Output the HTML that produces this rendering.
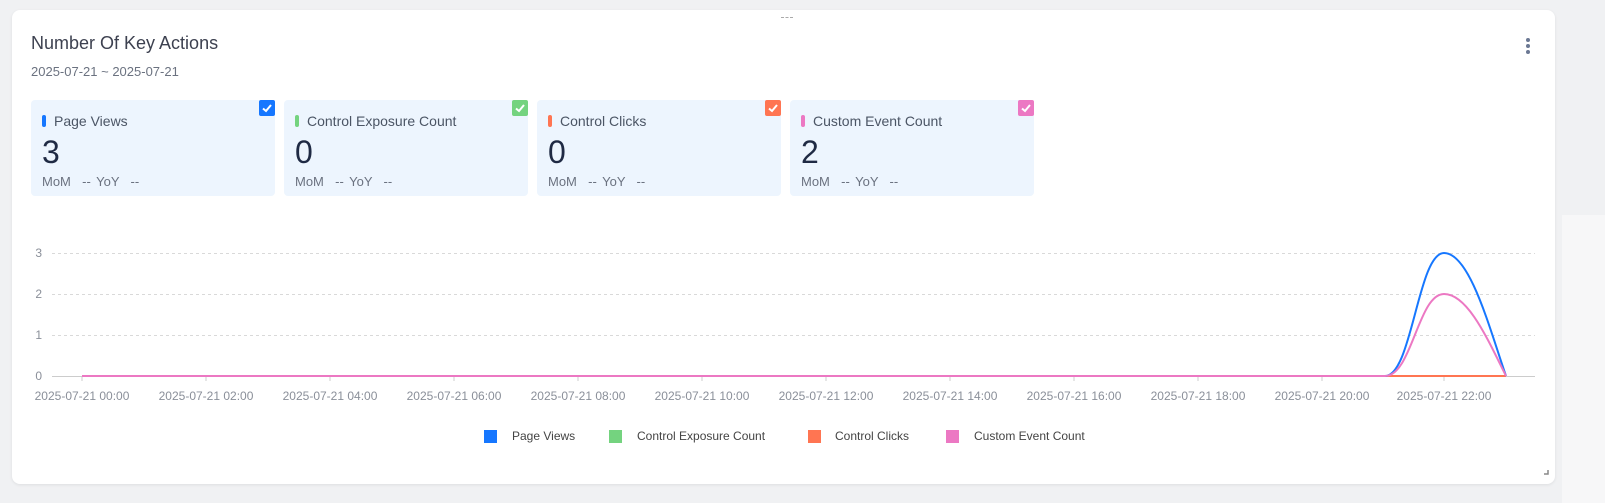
<!DOCTYPE html>
<html><head><meta charset="utf-8"><style>
body{margin:0;width:1605px;height:503px;background:#f0f1f3;font-family:"Liberation Sans",sans-serif;position:relative;overflow:hidden}
.card{position:absolute;left:12px;top:10px;width:1543px;height:474px;background:#fff;border-radius:8px;box-shadow:0 1px 3px rgba(0,0,0,.08)}
.sb{position:absolute;left:1562px;top:215px;width:43px;height:288px;background:#f7f7f8}
.title{position:absolute;left:31px;top:33px;font-size:18px;color:#3d4150}
.date{position:absolute;left:31px;top:64px;font-size:13px;color:#6b7280}
.dots{position:absolute;left:1526px;top:38px;width:4px}
.dots i{display:block;width:4px;height:4px;border-radius:2px;background:#6b7893;margin-bottom:2px}
.k{position:absolute;top:100px;width:244px;height:96px;background:#edf5fe;border-radius:4px}
.k .cb{position:absolute;right:0;top:0;width:16px;height:16px;border-radius:2px}
.k .cb svg{position:absolute;left:0;top:0}
.k .lbl{position:absolute;left:11px;top:13px;font-size:14px;color:#4b5565}
.k .lbl b{display:inline-block;width:4px;height:12px;border-radius:2px;margin-right:8px;vertical-align:-1px}
.k .v{position:absolute;left:11px;top:34px;font-size:32px;color:#1f2a44}
.k .m{position:absolute;left:11px;top:74px;font-size:13px;color:#6b7280;word-spacing:2px}
</style></head><body>
<div class="sb"></div>
<div class="card"></div>
<div style="position:absolute;left:781px;top:17px;width:12px;height:2px;border-top:1px dashed #aaa"></div>
<div class="title">Number Of Key Actions</div>
<div class="date">2025-07-21 ~ 2025-07-21</div>
<div class="dots"><i></i><i></i><i></i></div>
<div class="k" style="left:31px"><div class="cb" style="background:#1677ff"><svg width="16" height="16"><path d="M4,8.5 L7,11 L12,5" fill="none" stroke="#fff" stroke-width="2"/></svg></div><div class="lbl"><b style="background:#1677ff"></b>Page Views</div><div class="v">3</div><div class="m">MoM &nbsp;-- YoY &nbsp;--</div></div>
<div class="k" style="left:284px"><div class="cb" style="background:#74d37f"><svg width="16" height="16"><path d="M4,8.5 L7,11 L12,5" fill="none" stroke="#fff" stroke-width="2"/></svg></div><div class="lbl"><b style="background:#74d37f"></b>Control Exposure Count</div><div class="v">0</div><div class="m">MoM &nbsp;-- YoY &nbsp;--</div></div>
<div class="k" style="left:537px"><div class="cb" style="background:#ff7552"><svg width="16" height="16"><path d="M4,8.5 L7,11 L12,5" fill="none" stroke="#fff" stroke-width="2"/></svg></div><div class="lbl"><b style="background:#ff7552"></b>Control Clicks</div><div class="v">0</div><div class="m">MoM &nbsp;-- YoY &nbsp;--</div></div>
<div class="k" style="left:790px"><div class="cb" style="background:#ec78c3"><svg width="16" height="16"><path d="M4,8.5 L7,11 L12,5" fill="none" stroke="#fff" stroke-width="2"/></svg></div><div class="lbl"><b style="background:#ec78c3"></b>Custom Event Count</div><div class="v">2</div><div class="m">MoM &nbsp;-- YoY &nbsp;--</div></div>
<svg style="position:absolute;left:0;top:0" width="1605" height="503" font-family="Liberation Sans, sans-serif">
<g stroke="#d9d9d9" stroke-dasharray="3,3">
<line x1="52" y1="253.5" x2="1535" y2="253.5"/><line x1="52" y1="294.5" x2="1535" y2="294.5"/><line x1="52" y1="335.5" x2="1535" y2="335.5"/></g>
<line x1="52" y1="376.5" x2="1535" y2="376.5" stroke="#ccc"/>
<g font-size="12" fill="#8a8f99" text-anchor="end"><text x="42" y="257">3</text><text x="42" y="298">2</text><text x="42" y="339">1</text><text x="42" y="380">0</text></g>
<g stroke="#ccc">
<line x1="82" y1="377" x2="82" y2="381"/><line x1="206" y1="377" x2="206" y2="381"/><line x1="330" y1="377" x2="330" y2="381"/><line x1="454" y1="377" x2="454" y2="381"/><line x1="578" y1="377" x2="578" y2="381"/><line x1="702" y1="377" x2="702" y2="381"/><line x1="826" y1="377" x2="826" y2="381"/><line x1="950" y1="377" x2="950" y2="381"/><line x1="1074" y1="377" x2="1074" y2="381"/><line x1="1198" y1="377" x2="1198" y2="381"/><line x1="1322" y1="377" x2="1322" y2="381"/><line x1="1444" y1="377" x2="1444" y2="381"/></g>
<g font-size="12" fill="#8a8f99" text-anchor="middle">
<text x="82" y="400">2025-07-21 00:00</text><text x="206" y="400">2025-07-21 02:00</text><text x="330" y="400">2025-07-21 04:00</text><text x="454" y="400">2025-07-21 06:00</text><text x="578" y="400">2025-07-21 08:00</text><text x="702" y="400">2025-07-21 10:00</text><text x="826" y="400">2025-07-21 12:00</text><text x="950" y="400">2025-07-21 14:00</text><text x="1074" y="400">2025-07-21 16:00</text><text x="1198" y="400">2025-07-21 18:00</text><text x="1322" y="400">2025-07-21 20:00</text><text x="1444" y="400">2025-07-21 22:00</text></g>
<line x1="82" y1="376" x2="1506" y2="376" stroke="#ff7552" stroke-width="2"/>
<path d="M82,376 L1385,376 C1412,376 1418,253 1444,253 C1470,253 1490,330 1506,376" fill="none" stroke="#1677ff" stroke-width="2"/>
<path d="M82,376 L1385,376 C1412,376 1418,294 1444,294 C1468,294 1488,340 1506,376" fill="none" stroke="#ec78c3" stroke-width="2"/>
<g font-size="12" fill="#444">
<rect x="484" y="430" width="13" height="13" fill="#1677ff"/><text x="512" y="440">Page Views</text>
<rect x="609" y="430" width="13" height="13" fill="#74d37f"/><text x="637" y="440">Control Exposure Count</text>
<rect x="808" y="430" width="13" height="13" fill="#ff7552"/><text x="835" y="440">Control Clicks</text>
<rect x="946" y="430" width="13" height="13" fill="#ec78c3"/><text x="974" y="440">Custom Event Count</text></g>
<path d="M1544,474 L1548,474 L1548,470" fill="none" stroke="#888" stroke-width="1.5"/>
</svg>
</body></html>
